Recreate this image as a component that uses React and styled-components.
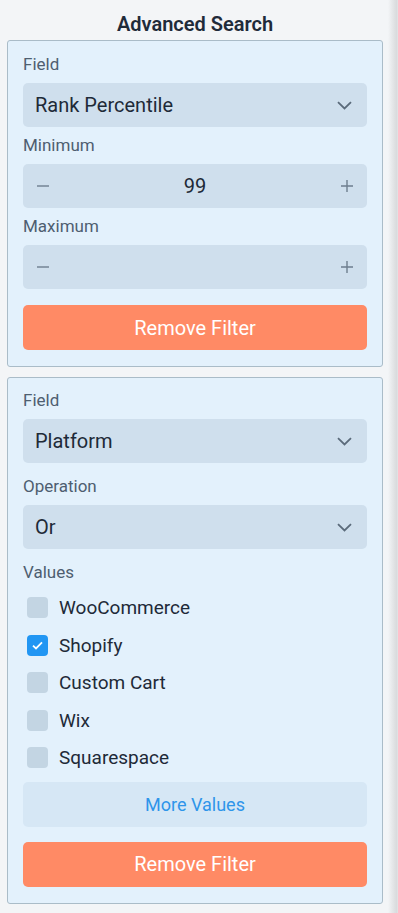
import React, { useState } from 'react';
import styled, { createGlobalStyle } from 'styled-components';

const GlobalStyle = createGlobalStyle`
  html, body {
    margin: 0;
    padding: 0;
    background: #f3f5f7;
    font-family: Roboto, "Liberation Sans", Arial, sans-serif;
  }
  * {
    box-sizing: border-box;
  }
`;

const Page = styled.div`
  display: flex;
  min-height: 100vh;
  width: 398px;
`;

const Sidebar = styled.div`
  flex: 1;
  display: flex;
  flex-direction: column;
  padding: 12px 5px 0 7px;
`;

const Edge = styled.div`
  flex: 0 0 10px;
  background: linear-gradient(to right, #f3f5f7 0%, #e6e8ea 40%, #d9dbdd 85%, #e2e4e6 100%);
`;

const Title = styled.h2`
  margin: 0 0 4px;
  font-size: 20px;
  line-height: 24px;
  font-weight: 600;
  color: #1f2b3a;
  text-align: center;
`;

const Card = styled.div`
  display: flex;
  flex-direction: column;
  gap: ${p => p.gap}px;
  margin-bottom: 10px;
  padding: ${p => p.top}px 15px 16px;
  background: #e3f1fc;
  border: 1px solid #aabcc8;
  border-radius: 3px;
`;

const Group = styled.div`
  display: flex;
  flex-direction: column;
`;

const Label = styled.div`
  margin-bottom: ${p => p.space || 8}px;
  font-size: 17px;
  line-height: 21px;
  color: #4e5e70;
`;

const SelectBox = styled.div`
  display: flex;
  align-items: center;
  justify-content: space-between;
  height: 44px;
  padding: 0 15px 0 12px;
  background: #cfdfed;
  border-radius: 5px;
  font-size: 20px;
  color: #1e2a38;
`;

const NumberBox = styled.div`
  display: flex;
  align-items: center;
  justify-content: space-between;
  height: 44px;
  padding: 0 14px;
  background: #cfdfed;
  border-radius: 5px;
  font-size: 20px;
  color: #1e2a38;
`;

const NumberValue = styled.span`
  flex: 1;
  text-align: center;
`;

const StepIcon = styled.svg`
  flex: 0 0 12px;
  width: 12px;
  height: 12px;
  stroke: #6e7e8e;
  stroke-width: 1.4;
`;

const Chevron = styled.svg`
  width: 15px;
  height: 9px;
  fill: none;
  stroke: #5b6b7b;
  stroke-width: 1.8;
`;

const RemoveButton = styled.button`
  height: 45px;
  margin-top: ${p => p.offset}px;
  border: none;
  border-radius: 5px;
  background: #ff8a65;
  color: #fff;
  font-family: inherit;
  font-size: 20px;
`;

const MoreButton = styled.button`
  height: 45px;
  margin-top: 5px;
  border: none;
  border-radius: 5px;
  background: #d6e7f5;
  color: #2e95ea;
  font-family: inherit;
  font-size: 18px;
`;

const CheckList = styled.div`
  display: flex;
  flex-direction: column;
`;

const CheckRow = styled.label`
  display: flex;
  align-items: center;
  gap: 11px;
  height: 37.5px;
  padding-left: 4px;
  font-size: 19px;
  color: #1e2a38;
`;

const Box = styled.span`
  display: flex;
  align-items: center;
  justify-content: center;
  width: 21px;
  height: 21px;
  border-radius: 4px;
  background: ${p => (p.checked ? '#2196f3' : '#c3d5e3')};
`;

const ChevronDown = () => (
  <Chevron viewBox="0 0 15 9">
    <path d="M1 1.2 L7.5 7.5 L14 1.2" />
  </Chevron>
);

const Minus = () => (
  <StepIcon viewBox="0 0 12 12">
    <path d="M0 6 H12" />
  </StepIcon>
);

const Plus = () => (
  <StepIcon viewBox="0 0 12 12">
    <path d="M0 6 H12 M6 0 V12" />
  </StepIcon>
);

const Select = ({ value }) => (
  <SelectBox>
    <span>{value}</span>
    <ChevronDown />
  </SelectBox>
);

const NumberInput = ({ value }) => (
  <NumberBox>
    <Minus />
    <NumberValue>{value}</NumberValue>
    <Plus />
  </NumberBox>
);

const Checkbox = ({ label, checked, onToggle }) => (
  <CheckRow onClick={onToggle}>
    <Box checked={checked}>
      {checked && (
        <svg width="11" height="9" viewBox="0 0 11 9">
          <path d="M1 4.6 L4 7.4 L10 1.4" fill="none" stroke="#fff" strokeWidth="1.8" />
        </svg>
      )}
    </Box>
    {label}
  </CheckRow>
);

const PLATFORMS = ['WooCommerce', 'Shopify', 'Custom Cart', 'Wix', 'Squarespace'];

export default function App() {
  const [picked, setPicked] = useState({ Shopify: true });

  const toggle = name => setPicked(prev => ({ ...prev, [name]: !prev[name] }));

  return (
    <Page>
      <GlobalStyle />
      <Sidebar>
        <Title>Advanced Search</Title>

        <Card gap={8} top={13}>
          <Group>
            <Label>Field</Label>
            <Select value="Rank Percentile" />
          </Group>
          <Group>
            <Label>Minimum</Label>
            <NumberInput value="99" />
          </Group>
          <Group>
            <Label>Maximum</Label>
            <NumberInput value="" />
          </Group>
          <RemoveButton offset={8}>Remove Filter</RemoveButton>
        </Card>

        <Card gap={13} top={12}>
          <Group>
            <Label>Field</Label>
            <Select value="Platform" />
          </Group>
          <Group>
            <Label>Operation</Label>
            <Select value="Or" />
          </Group>
          <Group>
            <Label space={6}>Values</Label>
            <CheckList>
              {PLATFORMS.map(name => (
                <Checkbox
                  key={name}
                  label={name}
                  checked={!!picked[name]}
                  onToggle={() => toggle(name)}
                />
              ))}
            </CheckList>
            <MoreButton>More Values</MoreButton>
          </Group>
          <RemoveButton offset={2}>Remove Filter</RemoveButton>
        </Card>
      </Sidebar>
      <Edge />
    </Page>
  );
}
